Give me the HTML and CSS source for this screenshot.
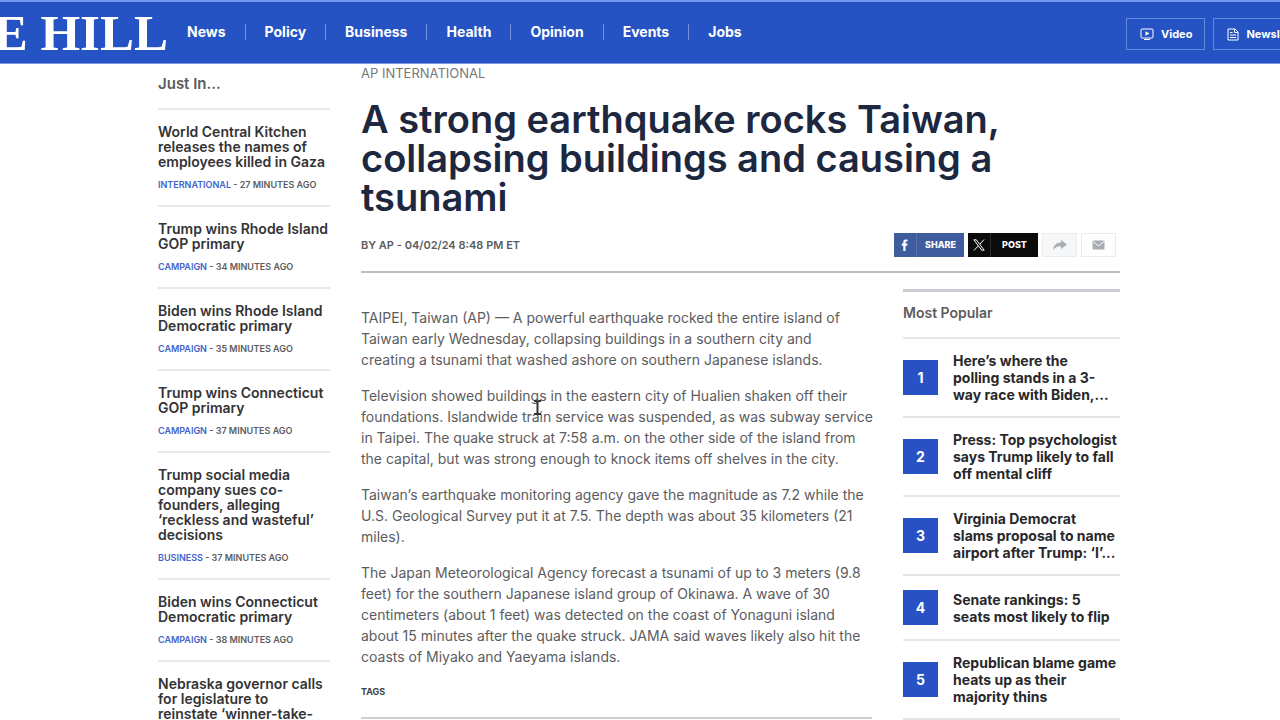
FILE: index.html
```
<!DOCTYPE html>
<html lang="en">
<head>
<meta charset="utf-8">
<title>A strong earthquake rocks Taiwan - The Hill</title>
<link rel="stylesheet" href="styles.css">
</head>
<body>
<header class="site-header">
  <a class="logo" href="#">THE HILL</a>
  <nav class="main-nav">
    <a href="#">News</a><a href="#">Policy</a><a href="#">Business</a><a href="#">Health</a><a href="#">Opinion</a><a href="#">Events</a><a href="#">Jobs</a>
  </nav>
  <div class="header-actions">
    <a class="action" href="#"><svg width="14" height="12" viewBox="0 0 14 12" fill="none" stroke="currentColor"><rect x="1" y="1" width="12" height="9" rx="1"/><path d="M4 11.5h6"/><path d="M5.5 3.2v4.6l4-2.3z" fill="currentColor" stroke="none"/></svg>Video</a>
    <a class="action" href="#"><svg width="12" height="13" viewBox="0 0 12 13" fill="none" stroke="currentColor"><path d="M1 1h7l3 3v8H1z"/><path d="M7.5 1v3.5H11M3 4.5h2.5M3 7h6M3 9.5h6"/></svg>Newsletters</a>
  </div>
</header>
<main class="page">
  <aside class="just-in">
    <h2 class="side-title">Just In...</h2>
    <article class="brief"><h3><a href="#">World Central Kitchen releases the names of employees killed in Gaza</a></h3><p><a href="#">INTERNATIONAL</a> - 27 MINUTES AGO</p></article>
    <article class="brief"><h3><a href="#">Trump wins Rhode Island GOP primary</a></h3><p><a href="#">CAMPAIGN</a> - 34 MINUTES AGO</p></article>
    <article class="brief"><h3><a href="#">Biden wins Rhode Island Democratic primary</a></h3><p><a href="#">CAMPAIGN</a> - 35 MINUTES AGO</p></article>
    <article class="brief"><h3><a href="#">Trump wins Connecticut GOP primary</a></h3><p><a href="#">CAMPAIGN</a> - 37 MINUTES AGO</p></article>
    <article class="brief"><h3><a href="#">Trump social media company sues co-founders, alleging ‘reckless and wasteful’ decisions</a></h3><p><a href="#">BUSINESS</a> - 37 MINUTES AGO</p></article>
    <article class="brief"><h3><a href="#">Biden wins Connecticut Democratic primary</a></h3><p><a href="#">CAMPAIGN</a> - 38 MINUTES AGO</p></article>
    <article class="brief"><h3><a href="#">Nebraska governor calls<br>for legislature to<br>reinstate ‘winner-take-<br>all’</a></h3></article>
  </aside>
  <div class="story">
    <header class="story-header">
      <a class="kicker" href="#">AP INTERNATIONAL</a>
      <h1>A strong earthquake rocks Taiwan,<br>collapsing buildings and causing a<br>tsunami</h1>
      <div class="byline-row">
        <p class="byline">BY AP - 04/02/24 8:48 PM ET</p>
        <div class="share">
          <button class="share-button facebook" type="button"><span class="share-icon"><svg width="8" height="12" viewBox="0 0 8 12"><path d="M2.3 12V6.7H.8V4.6h1.5V3.1C2.3 1.4 3.3.6 4.9.6h1.6v2H5.4c-.7 0-.9.3-.9.9v1.1h2l-.3 2.1H4.5V12z" fill="currentColor"/></svg></span><span class="share-label">SHARE</span></button>
          <button class="share-button x" type="button"><span class="share-icon"><svg width="12" height="12" viewBox="0 0 12 12" fill="none" stroke="currentColor"><path d="M.8.8h2.5l7.9 10.4H8.7zM11 .6 6.8 5.2M5 7.1 1 11.5"/></svg></span><span class="share-label">POST</span></button>
          <button class="share-button forward" type="button" aria-label="Share"><svg width="16" height="12" viewBox="0 0 16 12"><path d="M9 1l6 4.5L9 10V7.3C5.5 7 3.5 8 1 11c.5-4.500 3-7.300 8-7.500z" fill="currentColor"/></svg></button>
          <button class="share-button mail" type="button" aria-label="Email"><svg width="13" height="10" viewBox="0 0 13 10"><rect x=".5" y=".5" width="12" height="9" rx="1" fill="currentColor"/><path d="M1 1.500l5.500 4.500L12 1.500" fill="none" stroke="#fff"/></svg></button>
        </div>
      </div>
    </header>
    <div class="story-columns">
      <div class="story-body">
        <p>TAIPEI, Taiwan (AP) — A powerful earthquake rocked the entire island of<br>Taiwan early Wednesday, collapsing buildings in a southern city and<br>creating a tsunami that washed ashore on southern Japanese islands.</p>
        <p>Television showed buildings in the eastern city of Hualien shaken off their<br>foundations. Islandwide train service was suspended, as was subway service<br>in Taipei. The quake struck at 7:58 a.m. on the other side of the island from<br>the capital, but was strong enough to knock items off shelves in the city.</p>
        <p>Taiwan’s earthquake monitoring agency gave the magnitude as 7.2 while the<br>U.S. Geological Survey put it at 7.5. The depth was about 35 kilometers (21<br>miles).</p>
        <p>The Japan Meteorological Agency forecast a tsunami of up to 3 meters (9.8<br>feet) for the southern Japanese island group of Okinawa. A wave of 30<br>centimeters (about 1 feet) was detected on the coast of Yonaguni island<br>about 15 minutes after the quake struck. JAMA said waves likely also hit the<br>coasts of Miyako and Yaeyama islands.</p>
        <h2 class="tags">TAGS</h2>
      </div>
      <aside class="popular">
        <h2 class="popular-title">Most Popular</h2>
        <ol>
          <li><span class="rank">1</span><a href="#">Here’s where the<br>polling stands in a 3-<br>way race with Biden,...</a></li>
          <li><span class="rank">2</span><a href="#">Press: Top psychologist<br>says Trump likely to fall<br>off mental cliff</a></li>
          <li><span class="rank">3</span><a href="#">Virginia Democrat<br>slams proposal to name<br>airport after Trump: ‘I’...</a></li>
          <li><span class="rank">4</span><a href="#">Senate rankings: 5<br>seats most likely to flip</a></li>
          <li><span class="rank">5</span><a href="#">Republican blame game<br>heats up as their<br>majority thins</a></li>
        </ol>
      </aside>
    </div>
  </div>
</main>
<svg class="pointer" width="9" height="15" viewBox="0 0 9 15" fill="none" stroke="#333" stroke-width="2"><path d="M1 1h2l1.500 1L6 1h2M4.500 2v11M1 14h2l1.500-1L6 14h2"/></svg>
</body>
</html>
```
FILE: styles.css
```
* { box-sizing: border-box; }
html { overflow: hidden; }
body {
  margin: 0;
  height: 100vh;
  overflow: hidden;
  background: #fff;
  color: #5c5c60;
  font-family: Inter, "Liberation Sans", sans-serif;
}
h1, h2, h3, p, ol { margin: 0; padding: 0; }
a { color: inherit; text-decoration: none; }

.site-header {
  display: flex;
  align-items: center;
  height: 64px;
  overflow: hidden;
  border-top: 2px solid #6f98ea;
  border-bottom: 1px solid #7a9ae0;
  background: #2653c3;
  color: #fff;
}
.logo {
  display: flex;
  justify-content: flex-end;
  flex: none;
  width: 168px;
  font: 700 51px/60px "Liberation Serif", serif;
  white-space: nowrap;
}
.main-nav { display: flex; flex: none; padding-bottom: 1px; }
.main-nav a {
  padding: 0 19px;
  border-left: 1px solid #6f91df;
  font-size: 14px;
  font-weight: 700;
  line-height: 16px;
}
.main-nav a:first-child { border-left: 0; }
.header-actions {
  display: flex;
  flex: none;
  gap: 8px;
  margin-left: auto;
  margin-right: -44px;
  padding-top: 3px;
}
.action {
  display: flex;
  align-items: center;
  gap: 7px;
  height: 32px;
  padding: 0 12px 0 13px;
  border: 1px solid #6388dc;
  font-size: 11px;
  font-weight: 700;
}

.page {
  display: flex;
  gap: 31px;
  max-width: 964px;
  margin: 0 auto;
  padding-right: 2px;
}
.just-in { flex: none; width: 172px; }
.side-title {
  padding: 10px 0 14px;
  font-size: 15px;
  font-weight: 600;
  line-height: 20px;
}
.brief {
  padding: 14px 0;
  border-top: 2px solid #e9e9eb;
}
.brief h3 {
  color: #333336;
  font-size: 14px;
  font-weight: 600;
  line-height: 15px;
}
.brief p {
  margin-top: 10px;
  font-size: 9px;
  font-weight: 600;
  line-height: 12px;
  white-space: nowrap;
}
.brief p a { color: #4263ca; }

.story { flex: 1; min-width: 0; }
.story-header {
  padding-bottom: 14px;
  border-bottom: 2px solid #bcbcc0;
}
.kicker {
  display: block;
  font-size: 13px;
  line-height: 18px;
  color: #77777b;
}
h1 {
  margin-top: 18px;
  color: #1d2740;
  font-size: 38px;
  font-weight: 600;
  line-height: 39px;
  white-space: nowrap;
}
.byline-row {
  display: flex;
  align-items: center;
  justify-content: space-between;
  margin-top: 16px;
  padding-right: 4px;
}
.byline { font-size: 11px; font-weight: 600; }
.share { display: flex; gap: 4px; }
.share-button {
  display: flex;
  align-items: center;
  justify-content: center;
  width: 35px;
  height: 24px;
  padding: 0;
  border: 1px solid #ececee;
  background: #fff;
  color: #a9abb3;
  font: 800 9px/12px Inter, sans-serif;
}
.facebook, .x { width: 70px; border: 0; color: #fff; }
.facebook { background: #3f5c9e; }
.x { background: #0b0b0c; }
.forward { background: #f6f7f9; }
.share-icon {
  display: flex;
  align-items: center;
  justify-content: center;
  width: 23px;
  height: 24px;
  border-right: 1px solid #ffffff22;
}
.share-label { flex: 1; text-align: center; }

.story-columns { display: flex; gap: 31px; }
.story-body {
  flex: 1;
  min-width: 0;
  padding-top: 34px;
  border-bottom: 2px solid #cfcfd3;
  align-self: flex-start;
}
.story-body p {
  margin-bottom: 15px;
  font-size: 14px;
  line-height: 21px;
  white-space: nowrap;
}
.tags {
  padding: 2px 0 17px;
  color: #3f3f43;
  font-size: 9px;
  font-weight: 700;
  line-height: 16px;
}
.popular {
  flex: none;
  width: 217px;
  margin-top: 16px;
  border-top: 3px solid #cacbd3;
}
.popular-title {
  padding: 11px 0 14px;
  font-size: 14px;
  font-weight: 600;
  line-height: 20px;
}
.popular ol { list-style: none; border-bottom: 2px solid #e4e6ea; }
.popular li {
  display: flex;
  align-items: center;
  gap: 15px;
  min-height: 65px;
  padding: 13px 0;
  border-top: 2px solid #e4e6ea;
  color: #28282b;
  font-size: 14px;
  font-weight: 700;
  line-height: 17px;
  white-space: nowrap;
}
.rank {
  display: grid;
  place-items: center;
  flex: none;
  width: 35px;
  height: 35px;
  background: #2852c4;
  color: #fff;
}
.pointer { position: absolute; left: 533px; top: 400px; }
```
